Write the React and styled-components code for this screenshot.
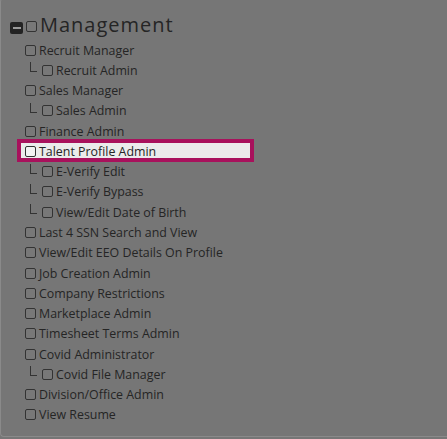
import styled, { createGlobalStyle } from "styled-components";

const GlobalStyle = createGlobalStyle`
  html, body {
    margin: 0;
    padding: 0;
    background: #767676;
    overflow: hidden;
  }
`;

const items = [
  { label: "Recruit Manager" },
  { label: "Recruit Admin", child: true },
  { label: "Sales Manager" },
  { label: "Sales Admin", child: true },
  { label: "Finance Admin" },
  { label: "Talent Profile Admin", highlight: true },
  { label: "E-Verify Edit", child: true },
  { label: "E-Verify Bypass", child: true },
  { label: "View/Edit Date of Birth", child: true },
  { label: "Last 4 SSN Search and View" },
  { label: "View/Edit EEO Details On Profile" },
  { label: "Job Creation Admin" },
  { label: "Company Restrictions" },
  { label: "Marketplace Admin" },
  { label: "Timesheet Terms Admin" },
  { label: "Covid Administrator" },
  { label: "Covid File Manager", child: true },
  { label: "Division/Office Admin" },
  { label: "View Resume" },
];

const Panel = styled.div`
  box-sizing: border-box;
  width: 100%;
  height: 439px;
  margin-top: -2px;
  border: 1px solid #8a8a8a;
  border-right: none;
  border-radius: 4px 0 0 4px;
  background: #767676;
  padding: 15px 0 0 8px;
  font-family: "Open Sans", "Liberation Sans", sans-serif;
  color: #252525;
`;

const Header = styled.div`
  display: flex;
  align-items: center;
  height: 26px;
`;

const Collapse = styled.span`
  box-sizing: border-box;
  width: 13px;
  height: 12px;
  margin: 2px 3px 0 1px;
  border-radius: 2px;
  background: #232323;
  display: flex;
  align-items: center;
  justify-content: center;

  &::after {
    content: "";
    width: 8px;
    height: 2px;
    background: #9a9a9a;
  }
`;

const Box = styled.span`
  box-sizing: border-box;
  flex: none;
  width: 11px;
  height: 11px;
  border: 1px solid #333;
  border-radius: 2px;
  background: ${({ $light }) => ($light ? "#f2f2f2" : "#787878")};
  margin-top: ${({ $top }) => $top || 0}px;
`;

const Title = styled.span`
  font-size: 20px;
  margin: -5px 0 0 3px;
  line-height: 26px;
  letter-spacing: 1px;
`;

const List = styled.ul`
  list-style: none;
  margin: 0;
  padding: 0 0 0 16px;
  display: flex;
  flex-direction: column;
`;

const Row = styled.li`
  box-sizing: border-box;
  position: relative;
  display: flex;
  align-items: center;
  gap: 3px;
  height: 20.28px;
  padding-left: ${({ $child }) => ($child ? "17px" : "0")};
  font-size: 12.4px;

  &::before {
    content: "";
    display: ${({ $highlight }) => ($highlight ? "block" : "none")};
    position: absolute;
    left: -4px;
    top: 2px;
    width: 229px;
    height: 15px;
    background: #ebebeb;
    outline: 4px solid #a8115c;
  }

  & > * {
    position: relative;
  }
`;

const Elbow = styled.span`
  position: absolute !important;
  left: 5px;
  top: 2px;
  width: 6px;
  height: 9px;
  border-left: 1px solid #333;
  border-bottom: 1px solid #333;
`;

export default function App() {
  return (
    <>
      <GlobalStyle />
      <Panel>
        <Header>
          <Collapse />
          <Box $top={-2} />
          <Title>Management</Title>
        </Header>
        <List>
          {items.map((it) => (
            <Row key={it.label} $child={it.child} $highlight={it.highlight}>
              {it.child && <Elbow />}
              <Box $light={it.highlight} />
              <span>{it.label}</span>
            </Row>
          ))}
        </List>
      </Panel>
    </>
  );
}
